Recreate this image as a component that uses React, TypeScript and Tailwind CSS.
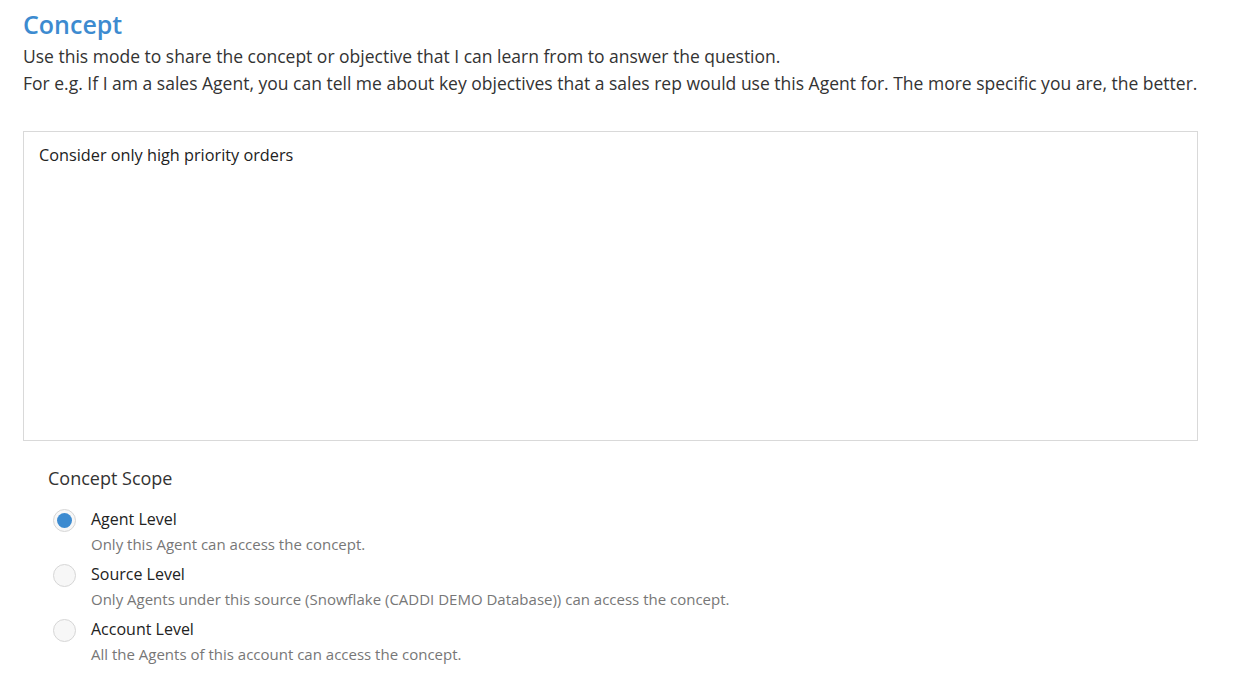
import React from "react";

const options = [
  { label: "Agent Level", desc: "Only this Agent can access the concept.", checked: true },
  { label: "Source Level", desc: "Only Agents under this source (Snowflake (CADDI DEMO Database)) can access the concept.", checked: false },
  { label: "Account Level", desc: "All the Agents of this account can access the concept.", checked: false },
];

export default function App() {
  return (
    <div className="w-[1246px] h-[676px] bg-white font-['Open_Sans',sans-serif] text-[#333] pl-[23px] pt-[6px]">
      <h1 className="text-[25px] leading-[36px] font-semibold text-[#3d8bd0]">Concept</h1>
      <p className="text-[17.5px] leading-[27px] mt-[1px]">
        Use this mode to share the concept or objective that I can learn from to answer the question.
        <br />
        For e.g. If I am a sales Agent, you can tell me about key objectives that a sales rep would use this Agent for. The more specific you are, the better.
      </p>
      <div className="mt-[34px] w-[1175px] h-[310px] border border-[#d9d9d9] px-[15px] py-[11px] text-[16.25px] leading-[24px] text-[#222]">
        Consider only high priority orders
      </div>
      <div className="pl-[25px] mt-[25px]">
        <div className="text-[18px] leading-[24px] font-medium text-[#333]">Concept Scope</div>
        <div className="mt-[17px] flex flex-col gap-[5px]">
          {options.map((o) => (
            <div key={o.label} className="flex">
              <div className="w-[43px] pl-[5px] pt-[2px] flex-none">
                <div className="w-[23px] h-[23px] rounded-full border border-[#d6d6d6] bg-[#f7f7f7] flex items-center justify-center">
                  {o.checked && <div className="w-[15px] h-[15px] rounded-full bg-[#3d8bd0]" />}
                </div>
              </div>
              <div>
                <div className="text-[16px] leading-[25px] text-[#222]">{o.label}</div>
                <div className="text-[15px] leading-[25px] text-[#777]">{o.desc}</div>
              </div>
            </div>
          ))}
        </div>
      </div>
    </div>
  );
}
